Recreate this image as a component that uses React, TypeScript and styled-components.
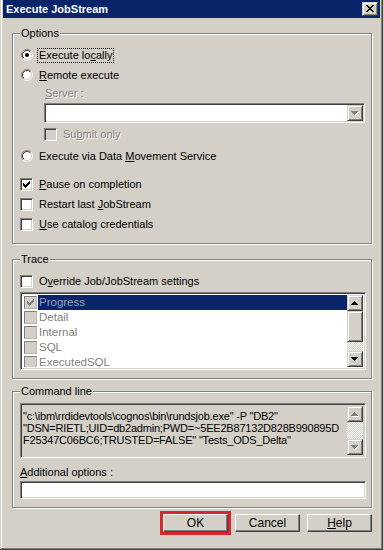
import React from "react";
import styled, { createGlobalStyle, css } from "styled-components";

const Global = createGlobalStyle`
  html, body { margin: 0; padding: 0; background: #d4d0c8; }
  body { font-family: "Liberation Sans", Arial, sans-serif; font-size: 11px; color: #000; }
  * { box-sizing: border-box; }
  u { text-decoration: underline; text-underline-offset: 1px; }
`;

const raised = css`
  background: #d4d0c8;
  border: 1px solid;
  border-color: #d4d0c8 #404040 #404040 #d4d0c8;
  box-shadow: inset 1px 1px #fff, inset -1px -1px #808080;
`;

const sunken = css`
  border: 1px solid;
  border-color: #808080 #fff #fff #808080;
  box-shadow: inset 1px 1px #404040, inset -1px -1px #d4d0c8;
`;

const embossed = css`
  color: #808080;
  text-shadow: 1px 1px 0 #fff;
`;

const Window = styled.div`
  width: 383px;
  height: 550px;
  padding: 0 3px 3px 3px;
  background: #d4d0c8;
  box-shadow: inset -1px -1px #404040, inset 1px 0 #d4d0c8, inset -2px -2px #808080, inset 2px 0 #fff;
  display: flex;
  flex-direction: column;
`;

const TitleBar = styled.div`
  height: 18px;
  flex: none;
  background: #0a246a;
  color: #fff;
  font-weight: bold;
  font-size: 11px;
  display: flex;
  align-items: center;
  justify-content: space-between;
  padding: 0 2px 0 3px;
`;

const CloseButton = styled.div`
  ${raised};
  width: 16px;
  height: 14px;
  display: flex;
  align-items: center;
  justify-content: center;
  padding-bottom: 1px;
`;

const Body = styled.div`
  flex: 1;
  padding: 15px 8px 0 9px;
  display: flex;
  flex-direction: column;
`;

const Frame = styled.div<{ $mt: number; $pt: number; $pb: number }>`
  position: relative;
  margin-top: ${(p) => p.$mt}px;
  padding: ${(p) => p.$pt}px 5px ${(p) => p.$pb}px 7px;
  border: 1px solid #808080;
  box-shadow: inset 1px 1px 0 #fff, 1px 1px 0 #fff;
  display: flex;
  flex-direction: column;
`;

const Legend = styled.span`
  position: absolute;
  top: -7px;
  left: 7px;
  padding: 0 1px;
  line-height: 13px;
  background: #d4d0c8;
`;

const Row = styled.div<{ $mt?: number; $indent?: number; $h?: number }>`
  display: flex;
  align-items: center;
  height: ${(p) => p.$h ?? 20}px;
  margin-top: ${(p) => p.$mt ?? 0}px;
  margin-left: ${(p) => p.$indent ?? 0}px;
  white-space: nowrap;
`;

const Label = styled.span<{ $focus?: boolean; $disabled?: boolean }>`
  margin-left: 4px;
  padding: 0 1px;
  line-height: 13px;
  border: 1px dotted ${(p) => (p.$focus ? "#000" : "transparent")};
  ${(p) => p.$disabled && embossed};
`;

const PlainLabel = styled.span<{ $disabled?: boolean }>`
  line-height: 13px;
  ${(p) => p.$disabled && embossed};
`;

const CheckBox = styled.span<{ $disabled?: boolean }>`
  ${sunken};
  width: 13px;
  height: 13px;
  flex: none;
  background: ${(p) => (p.$disabled ? "#d4d0c8" : "#fff")};
  display: flex;
  align-items: center;
  justify-content: center;
`;

const FlatCheck = styled.span`
  width: 13px;
  height: 13px;
  flex: none;
  margin-left: 1px;
  border: 1px solid #a0a0a0;
  border-color: #808080 #b8b4ac #b8b4ac #808080;
  background: #d4d0c8;
  display: flex;
  align-items: center;
  justify-content: center;
`;

const RadioWrap = styled.span`
  width: 12px;
  height: 12px;
  flex: none;
  margin-left: 1px;
  display: block;
  line-height: 0;
`;

const Combo = styled.div`
  ${sunken};
  margin-top: 2px;
  margin-left: 24px;
  width: 321px;
  height: 20px;
  flex: none;
  background: #fff;
  display: flex;
  justify-content: flex-end;
  padding: 1px;
`;

const ScrollButton = styled.div<{ $h?: number }>`
  ${raised};
  width: 16px;
  height: ${(p) => p.$h ?? 16}px;
  flex: none;
  display: flex;
  align-items: center;
  justify-content: center;
  line-height: 0;
`;

const Thumb = styled.div`
  ${raised};
  height: 31px;
  flex: none;
`;

const Track = styled.div`
  flex: 1;
  background: repeating-conic-gradient(#fff 0 25%, #d4d0c8 0 50%) 0 0 / 2px 2px;
`;

const ScrollBar = styled.div`
  width: 16px;
  flex: none;
  display: flex;
  flex-direction: column;
`;

const ListBox = styled.div`
  ${sunken};
  margin-top: 1px;
  width: 346px;
  height: 78px;
  flex: none;
  background: #fff;
  display: flex;
  padding: 2px;
  overflow: hidden;
`;

const Items = styled.div`
  flex: 1;
  display: flex;
  flex-direction: column;
  overflow: hidden;
`;

const Item = styled.div`
  height: 15px;
  flex: none;
  display: flex;
  align-items: center;
`;

const ItemText = styled.span<{ $selected?: boolean }>`
  flex: 1;
  align-self: stretch;
  display: flex;
  align-items: center;
  margin-left: 1px;
  padding-left: 1px;
  font-size: 11.5px;
  line-height: 13px;
  color: ${(p) => (p.$selected ? "#9ca0bc" : "#808080")};
  background: ${(p) => (p.$selected ? "#0a246a" : "transparent")};
`;

const CommandBox = styled.div`
  ${sunken};
  width: 346px;
  height: 55px;
  flex: none;
  background: #d4d0c8;
  display: flex;
  padding: 2px;
`;

const CommandText = styled.div`
  flex: 1;
  padding-top: 4px;
  line-height: 12px;
  letter-spacing: -0.2px;
  white-space: pre;
  overflow: hidden;
`;

const TextInput = styled.div`
  ${sunken};
  margin-top: 1px;
  width: 346px;
  height: 18px;
  flex: none;
  background: #fff;
`;

const ButtonRow = styled.div`
  margin-top: 6px;
  display: flex;
  justify-content: flex-end;
  gap: 7px;
`;

const Button = styled.div<{ $marked?: boolean }>`
  width: 65px;
  height: 18px;
  background: #d4d0c8;
  border: 1px solid;
  border-color: #fff #404040 #404040 #fff;
  box-shadow: inset -1px -1px #808080;
  display: flex;
  align-items: center;
  justify-content: center;
  font-size: 12px;
  ${(p) => p.$marked && css`outline: 3px solid #d9262e;`};
`;

const tri = "M3 0h1v1H3z M2 1h3v1H2z M1 2h5v1H1z M0 3h7v1H0z";
const triDown = "M0 0h7v1H0z M1 1h5v1H1z M2 2h3v1H2z M3 3h1v1H3z";

const Arrow: React.FC<{ down?: boolean; disabled?: boolean }> = ({ down, disabled }) => (
  <svg width="8" height="5" viewBox="0 0 8 5" shapeRendering="crispEdges">
    {disabled && <path d={down ? triDown : tri} fill="#fff" transform="translate(1 1)" />}
    <path d={down ? triDown : tri} fill={disabled ? "#808080" : "#000"} />
  </svg>
);

const CloseX = () => (
  <svg width="8" height="7" viewBox="0 0 8 7" shapeRendering="crispEdges">
    <path
      d="M0 0h2v1H0z M6 0h2v1H6z M1 1h2v1H1z M5 1h2v1H5z M2 2h4v1H2z M3 3h2v1H3z M2 4h4v1H2z M1 5h2v1H1z M5 5h2v1H5z M0 6h2v1H0z M6 6h2v1H6z"
      fill="#000"
    />
  </svg>
);

const checkPath =
  "M6 0h1v1H6z M5 1h2v1H5z M0 2h1v1H0z M4 2h3v1H4z M0 3h2v1H0z M3 3h3v1H3z M0 4h5v1H0z M1 5h3v1H1z M2 6h1v1H2z";

const Tick: React.FC<{ color?: string }> = ({ color = "#000" }) => (
  <svg width="7" height="7" viewBox="0 0 7 7" shapeRendering="crispEdges">
    <path d={checkPath} fill={color} />
  </svg>
);

const Radio: React.FC<{ checked?: boolean }> = ({ checked }) => (
  <RadioWrap>
    <svg width="12" height="12" viewBox="0 0 12 12">
      <defs>
        <linearGradient id="rOuter" x1="0" y1="0" x2="1" y2="1">
          <stop offset="0.5" stopColor="#808080" />
          <stop offset="0.5" stopColor="#ffffff" />
        </linearGradient>
        <linearGradient id="rInner" x1="0" y1="0" x2="1" y2="1">
          <stop offset="0.5" stopColor="#404040" />
          <stop offset="0.5" stopColor="#d4d0c8" />
        </linearGradient>
      </defs>
      <circle cx="6" cy="6" r="5.5" fill="none" stroke="url(#rOuter)" strokeWidth="1" />
      <circle cx="6" cy="6" r="4.5" fill="#fff" stroke="url(#rInner)" strokeWidth="1" />
      {checked && <circle cx="6" cy="6" r="2" fill="#000" />}
    </svg>
  </RadioWrap>
);

const listItems = ["Progress", "Detail", "Internal", "SQL", "ExecutedSQL"];

const commandLines = [
  '"c:\\ibm\\rrdidevtools\\cognos\\bin\\rundsjob.exe" -P "DB2"',
  '"DSN=RIETL;UID=db2admin;PWD=~5EE2B87132D828B990895D',
  'F25347C06BC6;TRUSTED=FALSE" "Tests_ODS_Delta"',
];

export default function App() {
  return (
    <>
      <Global />
      <Window>
        <TitleBar>
          <span>Execute JobStream</span>
          <CloseButton>
            <CloseX />
          </CloseButton>
        </TitleBar>
        <Body>
          <Frame $mt={0} $pt={11} $pb={9}>
            <Legend>Options</Legend>
            <Row>
              <Radio checked />
              <Label $focus>
                Execute lo<u>c</u>ally
              </Label>
            </Row>
            <Row>
              <Radio />
              <Label>
                <u>R</u>emote execute
              </Label>
            </Row>
            <Row $h={16} $indent={25}>
              <PlainLabel $disabled>
                <u>S</u>erver :
              </PlainLabel>
            </Row>
            <Combo>
              <ScrollButton>
                <Arrow down disabled />
              </ScrollButton>
            </Combo>
            <Row $mt={1} $indent={24}>
              <CheckBox $disabled />
              <Label $disabled>
                Su<u>b</u>mit only
              </Label>
            </Row>
            <Row $mt={2}>
              <Radio />
              <Label>
                Execute via Data <u>M</u>ovement Service
              </Label>
            </Row>
            <Row $mt={8}>
              <CheckBox>
                <Tick />
              </CheckBox>
              <Label>
                <u>P</u>ause on completion
              </Label>
            </Row>
            <Row>
              <CheckBox />
              <Label>
                Restart last <u>J</u>obStream
              </Label>
            </Row>
            <Row>
              <CheckBox />
              <Label>
                <u>U</u>se catalog credentials
              </Label>
            </Row>
          </Frame>

          <Frame $mt={15} $pt={11} $pb={8}>
            <Legend>Trace</Legend>
            <Row>
              <CheckBox />
              <Label>
                O<u>v</u>erride Job/JobStream settings
              </Label>
            </Row>
            <ListBox>
              <Items>
                {listItems.map((it, i) => (
                  <Item key={it}>
                    <FlatCheck>{i === 0 && <Tick color="#808080" />}</FlatCheck>
                    <ItemText $selected={i === 0}>{it}</ItemText>
                  </Item>
                ))}
              </Items>
              <ScrollBar>
                <ScrollButton>
                  <Arrow />
                </ScrollButton>
                <Thumb />
                <Track />
                <ScrollButton>
                  <Arrow down />
                </ScrollButton>
              </ScrollBar>
            </ListBox>
          </Frame>

          <Frame $mt={12} $pt={11} $pb={8}>
            <Legend>Command line</Legend>
            <CommandBox>
              <CommandText>
                {commandLines.map((l) => (
                  <div key={l}>{l}</div>
                ))}
              </CommandText>
              <ScrollBar>
                <ScrollButton>
                  <Arrow disabled />
                </ScrollButton>
                <Track />
                <ScrollButton>
                  <Arrow down disabled />
                </ScrollButton>
              </ScrollBar>
            </CommandBox>
            <Row $mt={6} $h={16}>
              <PlainLabel>
                <u>A</u>dditional options :
              </PlainLabel>
            </Row>
            <TextInput />
          </Frame>

          <ButtonRow>
            <Button $marked>OK</Button>
            <Button>Cancel</Button>
            <Button>
              <u>H</u>elp
            </Button>
          </ButtonRow>
        </Body>
      </Window>
    </>
  );
}
